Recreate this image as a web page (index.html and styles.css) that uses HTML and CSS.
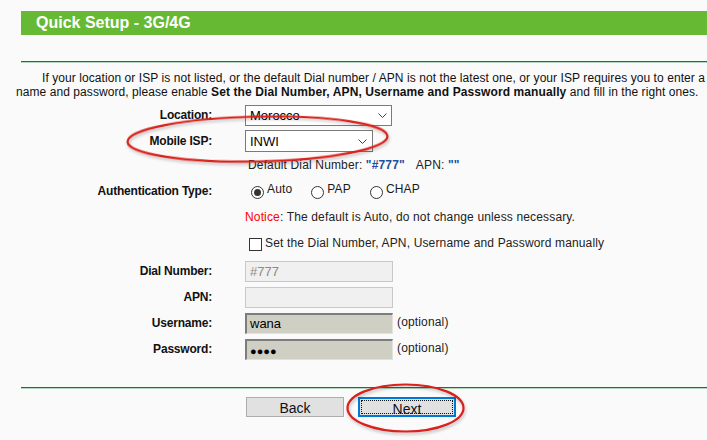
FILE: index.html
```
<!DOCTYPE html>
<html>
<head>
<meta charset="utf-8">
<link rel="stylesheet" href="styles.css">
</head>
<body>
<div class="page">
  <div class="titlebar"><h1 class="title">Quick Setup - 3G/4G</h1></div>
  <div class="rule"></div>
  <p class="intro">If your location or ISP is not listed, or the default Dial number / APN is not the latest one, or your ISP requires you to enter a<br><span class="second">name and password, please enable <b>Set the Dial Number, APN, Username and Password manually</b> and fill in the right ones.</span></p>

  <div class="form">
    <div class="label">Location:</div>
    <div class="value"><div class="select loc"><span>Morocco</span><svg class="chev" width="9" height="5" viewBox="0 0 9 5"><path d="M0.5 0.5 L4.5 4.5 L8.5 0.5" fill="none" stroke="#444" stroke-width="1"/></svg></div></div>

    <div class="label">Mobile ISP:</div>
    <div class="value"><div class="select isp"><span>INWI</span><svg class="chev" width="9" height="5" viewBox="0 0 9 5"><path d="M0.5 0.5 L4.5 4.5 L8.5 0.5" fill="none" stroke="#444" stroke-width="1"/></svg></div></div>

    <div class="label"></div>
    <div class="plain default">Default Dial Number: <b class="blue">"#777"</b><span class="apn">APN: <b class="blue">""</b></span></div>

    <div class="label">Authentication Type:</div>
    <div class="value radios">
      <span class="opt"><span class="radio on"></span>Auto</span>
      <span class="opt"><span class="radio"></span>PAP</span>
      <span class="opt"><span class="radio"></span>CHAP</span>
    </div>

    <div class="label"></div>
    <div class="plain notice"><span class="red">Notice</span>: The default is Auto, do not change unless necessary.</div>

    <div class="label"></div>
    <div class="value check"><span class="box"></span><span>Set the Dial Number, APN, Username and Password manually</span></div>

    <div class="label">Dial Number:</div>
    <div class="value"><div class="field off">#777</div></div>

    <div class="label">APN:</div>
    <div class="value"><div class="field off"></div></div>

    <div class="label">Username:</div>
    <div class="value"><div class="field on">wana</div><span class="hint">(optional)</span></div>

    <div class="label">Password:</div>
    <div class="value"><div class="field on dots">●●●●</div><span class="hint">(optional)</span></div>
  </div>

  <div class="rule bottom"></div>

  <div class="actions">
    <button class="btn">Back</button>
    <button class="btn next"><span class="focus">Next</span></button>
  </div>

  <svg class="marks" width="707" height="440" viewBox="0 0 707 440">
    <defs>
      <filter id="sh" x="-20%" y="-40%" width="140%" height="180%">
        <feDropShadow dx="1" dy="2" stdDeviation="1.5" flood-color="#000" flood-opacity="0.25"/>
      </filter>
    </defs>
    <ellipse cx="257.5" cy="139" rx="130" ry="22.5" transform="rotate(-1.2 257.5 139)" fill="none" stroke="#d8201c" stroke-width="2.2" filter="url(#sh)"/>
    <ellipse cx="405.5" cy="408" rx="58" ry="23.5" fill="none" stroke="#d8201c" stroke-width="2.2" filter="url(#sh)"/>
  </svg>
</div>
</body>
</html>
```
FILE: styles.css
```
html, body {
  margin: 0;
  padding: 0;
}
body {
  background: #fafafa;
  font-family: "Liberation Sans", Arial, sans-serif;
  font-size: 12px;
  color: #1a1a1a;
  overflow: hidden;
  width: 707px;
  height: 440px;
}
.page {
  position: relative;
  padding-top: 11px;
  height: 429px;
}
.titlebar {
  margin-left: 21px;
  height: 24px;
  background: #66b933;
  display: flex;
  align-items: center;
}
.title {
  margin: 0;
  padding-left: 15px;
  font-size: 16px;
  font-weight: bold;
  color: #ffffff;
  line-height: 24px;
}
.rule {
  margin-left: 21px;
  margin-top: 26px;
  height: 0;
  border-top: 1px solid #2b6a45;
  border-bottom: 1px solid #b5d6bf;
}
.rule.bottom {
  margin-top: 25px;
}
.intro {
  margin: 8px 0 0 16px;
  line-height: 14px;
  white-space: nowrap;
  text-indent: 26px;
  color: #111;
  letter-spacing: 0.07px;
}
.intro .second {
  display: inline-block;
  text-indent: 0;
}
.intro b {
  font-weight: bold;
  letter-spacing: 0.1px;
}
.form {
  margin-top: 3px;
  display: grid;
  grid-template-columns: 212px 440px;
  grid-template-rows: 26px 26px 22px 30px 22px 30px 26px 26px 26px 26px;
  column-gap: 33px;
  align-items: center;
}
.label {
  text-align: right;
  font-weight: bold;
  color: #111;
  font-size: 12px;
  letter-spacing: -0.2px;
}
.value {
  display: flex;
  align-items: center;
}
.plain {
  display: block;
  line-height: 14px;
  letter-spacing: 0.15px;
}
.select {
  box-sizing: border-box;
  height: 21px;
  border: 1px solid #7a7a7a;
  background: #fff;
  display: flex;
  align-items: center;
  justify-content: space-between;
  padding: 0 4px 0 4px;
  font-size: 13px;
  color: #000;
}
.select.loc {
  width: 147px;
}
.select.isp {
  width: 128px;
  height: 22px;
  padding-right: 5px;
}
.chev {
  display: block;
}
.default {
  padding-left: 3px;
  color: #222;
}
.blue {
  color: #1f4f9e;
  font-weight: bold;
}
.apn {
  margin-left: 11px;
}
.radios {
  padding-left: 6px;
  letter-spacing: 0.15px;
}
.opt {
  display: inline-flex;
  align-items: flex-start;
  margin-right: 19px;
  line-height: 12px;
}
.radio {
  box-sizing: border-box;
  width: 13px;
  height: 13px;
  border: 1px solid #333;
  border-radius: 50%;
  background: #fff;
  margin-top: 3px;
  margin-right: 3px;
  position: relative;
}
.radio.on::after {
  content: "";
  position: absolute;
  left: 2px;
  top: 2px;
  width: 7px;
  height: 7px;
  border-radius: 50%;
  background: #333;
}
.notice {
  color: #222;
  padding-left: 0;
}
.red {
  color: #ff0000;
}
.check {
  padding-left: 4px;
  color: #222;
  letter-spacing: 0.15px;
}
.box {
  box-sizing: border-box;
  width: 13px;
  height: 13px;
  border: 1px solid #333;
  background: #fff;
  margin-right: 3px;
  margin-top: 3px;
}
.field {
  box-sizing: border-box;
  width: 148px;
  height: 21px;
  font-size: 13px;
  display: flex;
  align-items: center;
  padding-left: 4px;
}
.field.off {
  background: #f0f0f0;
  border: 1px solid #c8c8c8;
  color: #8a8a8a;
}
.field.on {
  background: #d0cfc4;
  border-top: 2px solid #7d7d7d;
  border-left: 2px solid #7d7d7d;
  border-right: 1px solid #e2e1da;
  border-bottom: 1px solid #e2e1da;
  color: #000;
  padding-left: 3px;
}
.field.dots {
  font-size: 11px;
  letter-spacing: 0;
  padding-top: 2px;
}
.hint {
  margin-left: 4px;
  color: #222;
  margin-top: -2px;
  letter-spacing: 0.15px;
}
.actions {
  margin-top: 8px;
  margin-left: 246px;
  display: flex;
  gap: 14px;
}
.btn {
  box-sizing: border-box;
  width: 98px;
  height: 20px;
  background: #e1e1e1;
  border: 1px solid #adadad;
  font-family: "Liberation Sans", Arial, sans-serif;
  font-size: 14px;
  color: #111;
  padding: 2px 0 0 0;
  margin: 0;
  line-height: 16px;
  display: flex;
  align-items: center;
  justify-content: center;
}
.btn.next {
  border: 2px solid #0078d7;
  padding: 1px;
}
.focus {
  box-sizing: border-box;
  width: 100%;
  height: 100%;
  border: 1px dotted #111;
  display: flex;
  align-items: center;
  justify-content: center;
  padding-top: 3px;
}
.marks {
  position: absolute;
  left: 0;
  top: 0;
  pointer-events: none;
}
```
